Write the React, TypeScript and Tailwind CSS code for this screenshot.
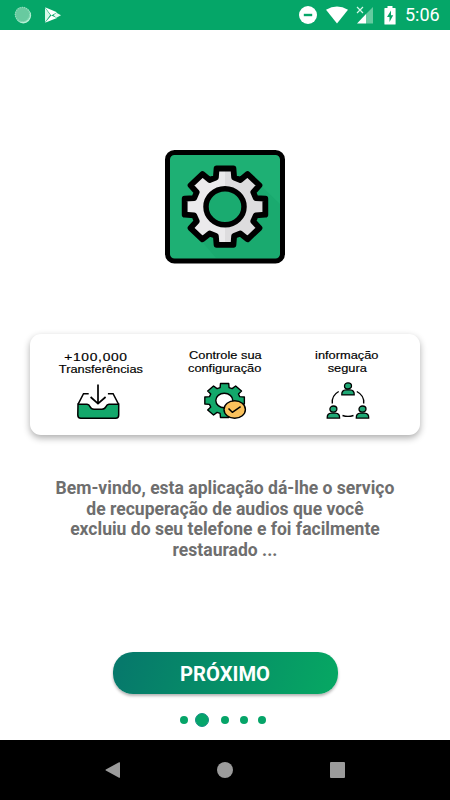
import type { ReactNode } from "react";

const dots = [
  { id: 1, className: "ml-0 size-2 bg-[#05a468]" },
  { id: 2, className: "ml-[7px] size-[14px] border border-[#168f86] bg-[#05a56a]" },
  { id: 3, className: "ml-3 size-2 bg-[#05a468]" },
  { id: 4, className: "ml-[11px] size-2 bg-[#05a468]" },
  { id: 5, className: "ml-2.5 size-2 bg-[#05a468]" }
];

// Eight tooth gear outline, rx/ry let it be slightly squashed.
function gearPath(cx: number, cy: number, rx: number, ry: number, base = 0.78) {
  const points: string[] = [];

  for (let tooth = 0; tooth < 8; tooth++) {
    const corners = [
      [-16.5, base],
      [-11.8, 1],
      [11.8, 1],
      [16.5, base]
    ];

    for (const [offset, radius] of corners) {
      const angle = ((tooth * 45 + offset) * Math.PI) / 180;
      const x = cx + Math.cos(angle) * rx * radius;
      const y = cy + Math.sin(angle) * ry * radius;
      points.push(`${x.toFixed(2)} ${y.toFixed(2)}`);
    }
  }

  return `M${points.join("L")}Z`;
}

const logoGear = gearPath(225, 206.7, 41.2, 39);

function StatusBar() {
  return (
    <header className="flex h-[30px] items-center bg-[#05a668] pl-[14px] pr-[10px]">
      <svg className="size-[18px]" viewBox="0 0 18 18">
        <circle cx="9.3" cy="9.6" r="7.8" fill="#b9f3d8" />
        <circle cx="8.5" cy="8.5" r="7.6" fill="#68caa0" />
        <circle cx="8.5" cy="8.5" r="7.2" fill="none" stroke="#8fdcba" strokeWidth="1.2" strokeDasharray="1.2 1" />
      </svg>
      <svg className="ml-3 h-[18px] w-[18px]" viewBox="0 0 18 18">
        <path d="M1 1.2 13 6.2 7.3 9.4Z" fill="#fff" />
        <path d="M1 1.8 6.2 9 1 16.2Z" fill="#d8f8ea" />
        <path d="M1 16.8 7.3 9.6 13 12Z" fill="#fff" />
        <path d="M12.4 6.8 17 9.2 12.4 11.7 9.5 9.2Z" fill="#e4faf0" />
      </svg>

      <div className="ml-auto flex items-center">
        <svg className="size-[18px]" viewBox="0 0 18 18">
          <circle cx="9" cy="9" r="9" fill="#fff" />
          <path d="M4.8 9h8.4" stroke="#05a668" strokeWidth="2.4" />
        </svg>
        <svg className="ml-[9px] h-[18px] w-[22px]" viewBox="0 0 22 18">
          <path d="M0 3.8Q11-2.8 22 3.8L11 17.4Z" fill="#fff" />
        </svg>
        <svg className="ml-[8px] h-[18px] w-[18px]" viewBox="0 0 18 18">
          <path d="M17 1V17.5H10V8Z" fill="#65cba0" />
          <path d="M10 8V17.5H1Z" fill="#fff" />
          <path d="m1 1 6 6M7 1 1 7" stroke="#d5f7e8" strokeWidth="1.2" />
        </svg>
        <svg className="ml-[10px] h-[19px] w-3" viewBox="0 0 12 19">
          <path d="M3.5 0h5v2H11q.6 0 .6.6V18q0 .6-.6.6H1q-.6 0-.6-.6V2.6Q.4 2 1 2h2.5Z" fill="#fff" />
          <path d="M7 4.5 3 11h2.500v5L9.200 9.300H7Z" fill="#05a668" />
        </svg>
        <span className="ml-[9px] w-[35px] whitespace-nowrap text-[18px] leading-[30px] text-white">5:06</span>
      </div>
    </header>
  );
}

function AppLogo() {
  return (
    <svg className="mx-auto mt-[119px] h-[116px] w-[122px] shrink-0" viewBox="164 149 122 116">
      <defs>
        <clipPath id="gear-right">
          <path d="M225 149h61v116h-61Z" />
        </clipPath>
      </defs>
      <rect x="167.5" y="152.5" width="115" height="108.5" rx="7" fill="#1eb074" />
      <path d="M251 176 280 204V258H216L199 238Z" fill="#1aaa6f" />
      <path d={logoGear} fill="#ebeaec" />
      <path d={logoGear} fill="#dddcde" clipPath="url(#gear-right)" />
      <path d={logoGear} fill="none" stroke="#000" strokeWidth="5.8" strokeLinejoin="round" />
      <ellipse cx="225" cy="206.7" rx="19" ry="18" fill="#1aab70" stroke="#000" strokeWidth="5.5" />
      <rect x="167.5" y="152.5" width="115" height="108.5" rx="7" fill="none" stroke="#000" strokeWidth="5" />
    </svg>
  );
}

function InboxIcon() {
  return (
    <svg className="h-[38px] w-[46px]" viewBox="75 382 46 38" fill="none" stroke="#000" strokeWidth="1.5">
      <path d="M78 404.300h9q2 .2 3 2.300 1.200 2.600 4 2.600h8q2.800 0 4-2.600 1-2.100 3-2.300h9.700V415q0 3.300-3 3.300H80.800q-3 0-3-3.300Z" fill="#13a86b" />
      <path d="m78 404.300 5.500-10.600h5.200M118.600 404.300l-5.500-10.600h-5.200" />
      <path d="M98 384.500V403M90.600 397l7.400 6.600 7.600-6.600" strokeWidth="1.7" />
    </svg>
  );
}

function GearCheckIcon() {
  return (
    <svg className="h-[38px] w-[46px]" viewBox="202 382 46 38" stroke="#000" strokeWidth="1.4" strokeLinejoin="round">
      <path d={gearPath(224.6, 400.5, 20.2, 17.3)} fill="#13a86b" />
      <ellipse cx="224.3" cy="400.5" rx="8.5" ry="7.2" fill="#fff" />
      <ellipse cx="234.7" cy="409.5" rx="10.7" ry="8.8" fill="#fac15c" />
      <path d="m228.500 408.500 3.800 3.800 8.300-5.600" fill="none" strokeWidth="1.5" />
    </svg>
  );
}

function Person({ x, y }: { x: number; y: number }) {
  return (
    <g transform={`translate(${x} ${y})`} fill="#1fa875" stroke="#000" strokeWidth="1.3">
      <path d="M-6.200 12.200Q-6.500 7.500-2 7.200H2Q6.500 7.500 6.200 12.200Z" />
      <ellipse cx="0" cy="3.2" rx="3.5" ry="3.1" />
    </g>
  );
}

function PeopleIcon() {
  return (
    <svg className="h-[38px] w-[46px]" viewBox="325 382 46 38">
      <path
        d="M338.700 391.500Q331.500 395.500 332.300 403.500M356.800 391.500Q364.500 395.500 363.700 403.500M342.500 415.500Q348 417.300 353.500 415.500"
        fill="none"
        stroke="#000"
        strokeWidth="1.4"
      />
      <Person x={348} y={382.7} />
      <Person x={333.4} y={405.9} />
      <Person x={362.5} y={405.9} />
    </svg>
  );
}

function Feature({ lines, icon, className }: { lines: ReactNode; icon: ReactNode; className: string }) {
  return (
    <div className={`flex flex-col items-center ${className}`}>
      <div className="flex h-[33px] flex-col items-center whitespace-nowrap font-['Liberation_Sans',Arial,sans-serif] text-[10px] leading-[13px] text-black [-webkit-text-stroke:0.15px_#000]">
        {lines}
      </div>
      {icon}
    </div>
  );
}

function FeatureCard() {
  return (
    <section className="mx-[30px] mt-[69px] flex h-[101px] shrink-0 rounded-[11px] bg-white pt-[15px] shadow-[0_3px_7px_rgba(0,0,0,0.32)]">
      <Feature
        className="ml-2 w-[120px]"
        lines={
          <>
            <span className="relative -left-[2px] top-[2px] scale-x-[1.38] tracking-[0.5px]">+100,000</span>
            <span className="relative left-[3px] top-px scale-x-[1.28]">Transferências</span>
          </>
        }
        icon={<InboxIcon />}
      />
      <Feature
        className="ml-[7px] w-[120px]"
        lines={
          <>
            <span className="scale-x-[1.28]">Controle sua</span>
            <span className="scale-x-[1.28]">configuração</span>
          </>
        }
        icon={<GearCheckIcon />}
      />
      <Feature
        className="ml-[3px] w-[120px]"
        lines={
          <>
            <span className="relative -left-px scale-x-[1.28]">informação</span>
            <span className="relative -left-px scale-x-[1.28]">segura</span>
          </>
        }
        icon={<PeopleIcon />}
      />
    </section>
  );
}

function NavigationBar() {
  return (
    <nav className="flex h-[60px] shrink-0 items-center bg-black pl-[105px]">
      <svg className="h-4 w-[15px]" viewBox="0 0 15 16">
        <path d="M15 .6V15.400Q14.400 16 13.600 15.500L.8 8.600Q0 8 .8 7.400L13.600.500Q14.400 0 15 .6Z" fill="#9b9b9b" />
      </svg>
      <span className="ml-[97px] size-4 rounded-full bg-[#9b9b9b]" />
      <span className="ml-[97px] h-4 w-[15px] rounded-[1px] bg-[#9b9b9b]" />
    </nav>
  );
}

export default function App() {
  return (
    <div className="flex h-[800px] w-[450px] flex-col overflow-hidden bg-white font-['Roboto',sans-serif]">
      <StatusBar />
      <main className="flex min-h-0 flex-1 flex-col">
        <AppLogo />
        <FeatureCard />
        <p className="mt-[43px] whitespace-nowrap text-center text-[17.55px] font-bold leading-[20.5px] text-[#6e6e6e]">
          Bem-vindo, esta aplicação dá-lhe o serviço
          <br />
          de recuperação de audios que você
          <br />
          excluiu do seu telefone e foi facilmente
          <br />
          restaurado ...
        </p>
        <button
          type="button"
          className="mx-auto mt-[92px] h-[42px] w-[225px] shrink-0 rounded-[20px] bg-linear-[110deg,#06796b_5%,#06a663_95%] pt-[3px] text-[20.2px] font-bold text-white shadow-[0_2px_3px_rgba(0,0,0,0.3)]"
        >
          PRÓXIMO
        </button>
        <div className="ml-[180px] mt-[19px] flex items-center">
          {dots.map((dot) => (
            <span key={dot.id} className={`rounded-full ${dot.className}`} />
          ))}
        </div>
      </main>
      <NavigationBar />
    </div>
  );
}
